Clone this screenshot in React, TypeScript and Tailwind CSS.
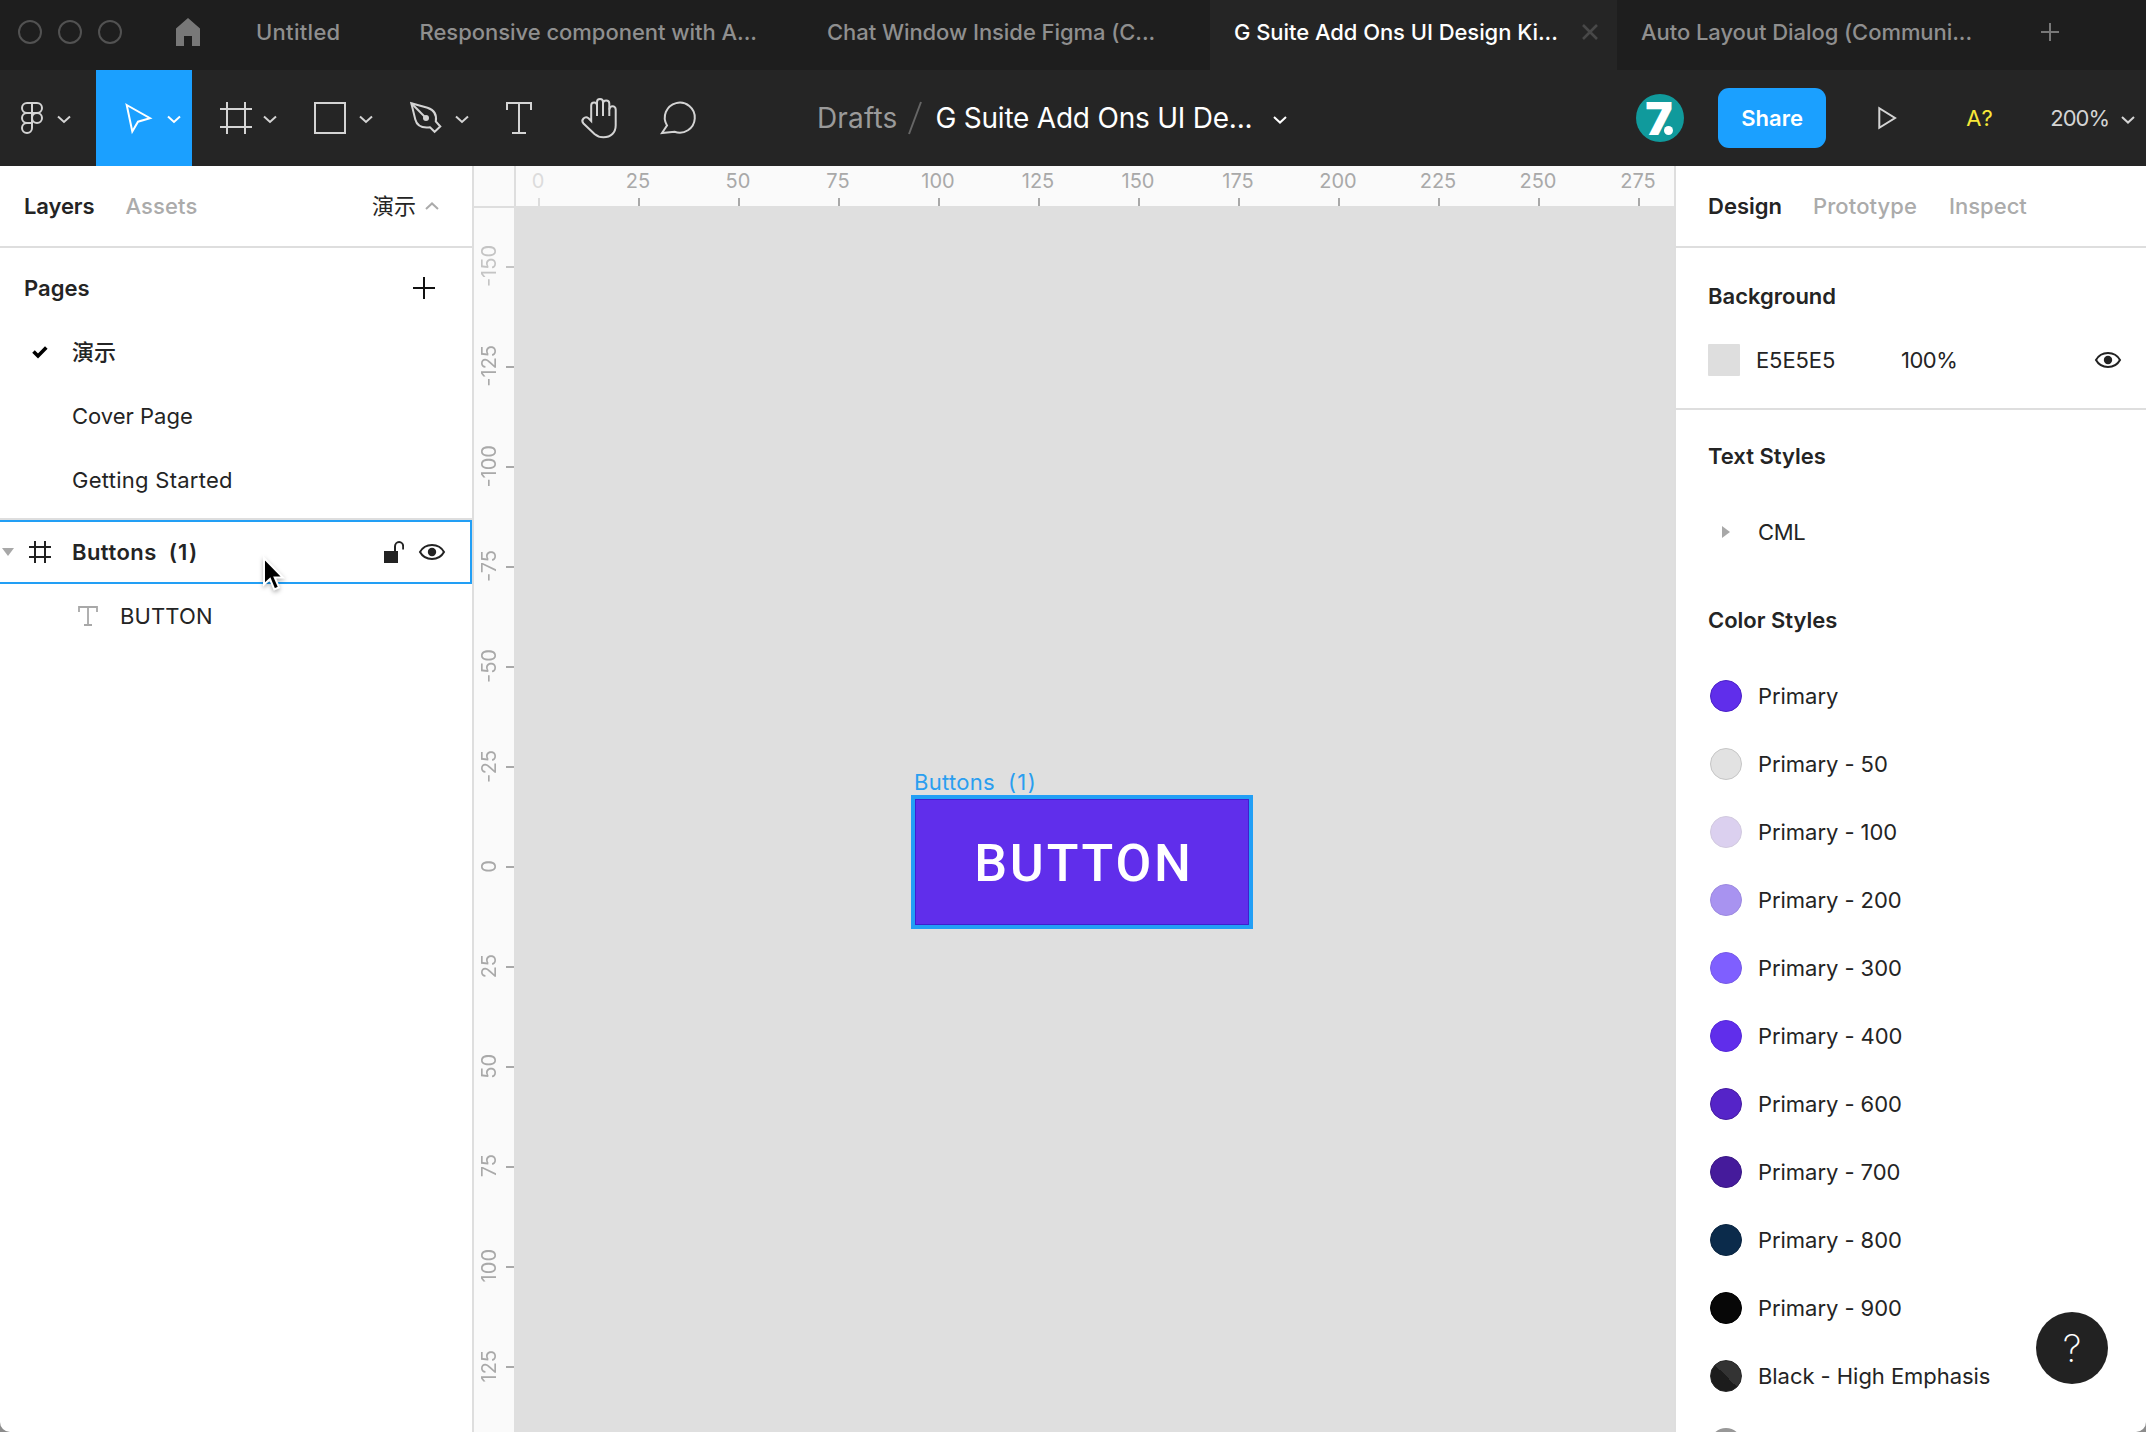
import React from "react";

const NBSP = "\u00a0";

function Chevron({ className = "" }: { className?: string }) {
  return (
    <svg className={className} width="14" height="8" viewBox="0 0 14 8" fill="none" stroke="currentColor" strokeWidth="2">
      <path d="M1 1l6 5.6L13 1" />
    </svg>
  );
}

function Eye() {
  return (
    <svg width="28" height="20" viewBox="0 0 28 20" fill="none" stroke="#222" strokeWidth="2">
      <path d="M2 10C4.600 5.300 9 3 14 3s9.400 2.300 12 7c-2.600 4.700-7 7-12 7S4.600 14.700 2 10Z" />
      <circle cx="14" cy="10" r="4.200" fill="#222" stroke="none" />
    </svg>
  );
}

/* ---------- Title bar ---------- */

function TitleBar() {
  return (
    <div className="flex h-[70px] shrink-0 bg-[#1e1e1e] text-[22px] font-medium leading-none text-[#8f8f8f]">
      <div className="flex w-[232px] shrink-0 items-center gap-4 pb-1.5 pl-[18px]">
        <span className="size-6 rounded-full border-2 border-[#525252]" />
        <span className="size-6 rounded-full border-2 border-[#525252]" />
        <span className="size-6 rounded-full border-2 border-[#525252]" />
        <svg className="ml-[38px]" width="24" height="28" viewBox="0 0 24 28" fill="#787878">
          <path d="M12 0L24 10.500V28H16V18H8V28H0V10.500Z" />
        </svg>
      </div>
      <div className="flex w-[164px] shrink-0 items-center pb-1.5 pl-6 tracking-[0.300px]">Untitled</div>
      <div className="flex w-[407px] shrink-0 items-center whitespace-nowrap pb-1.5 pl-[23.500px] tracking-[-0.030px]">
        Responsive component with A...
      </div>
      <div className="flex w-[407px] shrink-0 items-center whitespace-nowrap pb-1.5 pl-6 tracking-[-0.060px]">
        Chat Window Inside Figma (C...
      </div>
      <div className="flex w-[407px] shrink-0 items-center justify-between whitespace-nowrap bg-[#252525] pb-1.5 pl-6 pr-[19px] tracking-[-0.060px] text-white">
        G Suite Add Ons UI Design Ki...
        <svg width="16" height="16" viewBox="0 0 16 16" stroke="#484848" strokeWidth="2.600">
          <path d="M1 1l14 14M15 1L1 15" />
        </svg>
      </div>
      <div className="flex w-[424px] shrink-0 items-center whitespace-nowrap pb-1.5 pl-6 tracking-[-0.060px]">
        Auto Layout Dialog (Communi...
      </div>
      <div className="flex items-center pb-1.5">
        <svg width="18" height="18" viewBox="0 0 18 18" stroke="#787878" strokeWidth="2">
          <path d="M9 0v18M0 9h18" />
        </svg>
      </div>
    </div>
  );
}

/* ---------- Toolbar ---------- */

function Tool({ box, className, children }: { box: string; className: string; children: React.ReactNode }) {
  return (
    <div className={className}>
      <svg className="size-full" viewBox={box} fill="none" stroke="currentColor" strokeWidth="2">
        {children}
      </svg>
    </div>
  );
}

function Toolbar() {
  const wide = "size-24 shrink-0 text-[#d4d4d4]";
  const narrow = "h-24 w-20 shrink-0 text-[#d4d4d4]";
  return (
    <div className="flex h-24 shrink-0 items-center bg-[#252525] leading-none text-[#d4d4d4]">
      <Tool box="0 70 96 96" className={wide}>
        <path d="M32 103h-5a5 5 0 0 0 0 10h5M32 103h5a5 5 0 0 1 0 10h-5M32 113h-5a5 5 0 0 0 0 10h5M32 123h-5a5 5 0 1 0 5 5V103" />
        <circle cx="37" cy="118" r="5" />
        <path d="M58 116.500l6 5.500 6-5.500" />
      </Tool>
      <Tool box="96 70 96 96" className="size-24 shrink-0 bg-[#1ba0ff] text-white">
        <path d="M126.700 105L150 118.200 138 121.700 132.300 131.500Z" />
        <path d="M168 116.500l6 5.500 6-5.500" />
      </Tool>
      <Tool box="192 70 96 96" className={wide}>
        <path d="M227 102v32M245 102v32M220 109h32M220 127h32" />
        <path d="M264 116.500l6 5.500 6-5.500" />
      </Tool>
      <Tool box="288 70 96 96" className={wide}>
        <rect x="315" y="103" width="30" height="30" />
        <path d="M360 116.500l6 5.500 6-5.500" />
      </Tool>
      <Tool box="384 70 96 96" className={wide}>
        <path d="M411.300 103.200L427.500 107.800C434 110 437 114.500 435.800 121.500L440.300 126.500 434.600 131.800 430 127.200C421.500 128.300 416.800 125.500 415.300 119.500Z" />
        <path d="M411.300 103.200L426 118" />
        <circle cx="426" cy="118" r="3" fill="currentColor" stroke="none" />
        <path d="M456 116.500l6 5.500 6-5.500" />
      </Tool>
      <Tool box="480 70 80 96" className={narrow}>
        <path d="M507 110v-7h24v7M519 103v30M512 133h14" />
      </Tool>
      <Tool box="560 70 80 96" className={narrow}>
        <path d="M597 116v-10.500a2.900 2.900 0 0 0-5.800 0V121l-2.700-2.700c-3.500-2.800-8.200 1.700-5 5.200L594.500 134c3 2.600 5.500 3.300 9 3.300 7.500 0 12.200-4.800 12.200-12V109.500a3.150 3.150 0 0 0-6.300 0" />
        <path d="M597 106v-4a3 3 0 0 1 6 0v14M603 103.500a3.100 3 0 0 1 6.300 0V116" />
      </Tool>
      <Tool box="640 70 80 96" className={narrow}>
        <path d="M667 125.500a15 15 0 1 1 7.500 6.200L662 133Z" strokeLinejoin="miter" />
      </Tool>

      <div className="ml-[97px] flex shrink-0 items-center whitespace-nowrap text-[28px]">
        <span className="tracking-[0.150px] text-[#9a9a9a]">Drafts</span>
        <svg className="ml-[11px]" width="14" height="34" viewBox="0 0 14 34" stroke="#666" strokeWidth="2">
          <path d="M1 33L13 1" />
        </svg>
        <span className="ml-[13px] tracking-[-0.220px] text-white">G Suite Add Ons UI De...</span>
        <Chevron className="ml-[21px] mt-1 text-white" />
      </div>

      <div className="ml-auto flex shrink-0 items-center text-[22px]">
        <div className="relative flex size-12 items-center rounded-full bg-[#109a9c] pl-[9px]">
          <span className="text-[46px] font-black text-white">7</span>
          <span className="absolute left-[28px] top-[32px] size-[9px] rounded-full bg-white ring-2 ring-[#109a9c]" />
        </div>
        <div className="ml-[34px] flex h-[60px] w-[108px] items-center justify-center rounded-[11px] bg-[#1ba0ff] font-semibold text-white">
          Share
        </div>
        <svg className="ml-[52px]" width="20" height="24" viewBox="0 0 20 24" fill="none" stroke="currentColor" strokeWidth="2">
          <path d="M1.300 2.200v19.600L17 12Z" />
        </svg>
        <span className="ml-[68px] tracking-[1.500px] text-[#f8e838]">A?</span>
        <span className="ml-14 tracking-[-1px]">200%</span>
        <Chevron className="ml-3 mr-[11px] mt-1" />
      </div>
    </div>
  );
}

/* ---------- Left panel ---------- */

function LeftPanel() {
  return (
    <div className="relative flex w-[474px] shrink-0 flex-col border-r-2 border-[#dedede] bg-white text-[22px] leading-none text-[#242424]">
      <div className="flex h-[82px] items-center border-b-2 border-[#dedede] pl-6 pr-[33px]">
        <span className="font-semibold tracking-[-0.100px]">Layers</span>
        <span className="ml-[31px] font-medium tracking-[0.110px] text-[#ababab]">Assets</span>
        <span className="ml-auto">演示</span>
        <Chevron className="ml-[9px] rotate-180 text-[#ababab]" />
      </div>
      <div className="flex h-20 items-center justify-between pl-6 pr-[37px]">
        <span className="font-semibold">Pages</span>
        <svg width="22" height="22" viewBox="0 0 22 22" stroke="#111" strokeWidth="2">
          <path d="M11 0v22M0 11h22" />
        </svg>
      </div>
      <div className="flex h-14 items-center pb-2 pl-8">
        <svg width="16" height="14" viewBox="0 0 16 14" fill="none" stroke="#000" strokeWidth="3.600">
          <path d="M1.500 6.500L6 11 14.300 2.500" />
        </svg>
        <span className="ml-6 font-medium">演示</span>
      </div>
      <div className="flex h-16 items-center pl-[72px]">
        <span>Cover Page</span>
      </div>
      <div className="flex h-16 items-center pl-[72px]">
        <span className="tracking-[0.270px]">Getting Started</span>
      </div>
      <div className="h-1.5" />
      <div className="flex h-[68px] flex-col border-t-2 border-[#dedede]">
        <div className="flex h-16 items-center border-y-2 border-r-2 border-[#229ff5] pl-[2px] pr-6">
          <svg width="12" height="8" viewBox="0 0 12 8" fill="#a8a8a8">
            <path d="M0 0h12L6 8Z" />
          </svg>
          <svg className="ml-[15px]" width="22" height="22" viewBox="0 0 22 22" stroke="#222" strokeWidth="2">
            <path d="M6 0v22M16 0v22M0 6h22M0 16h22" />
          </svg>
          <div className="ml-[21px] whitespace-pre font-semibold tracking-[0.450px]">
            Buttons{NBSP + NBSP}
            <span className="tracking-[1.200px]">(1)</span>
          </div>
          <svg className="ml-auto" width="20" height="22" viewBox="0 0 20 22" fill="none" stroke="#222" strokeWidth="2">
            <rect x="0" y="10" width="14" height="12" fill="#222" stroke="none" />
            <path d="M11 10.500V5.500a4 4.300 0 0 1 8.200 0V8.500" />
          </svg>
          <div className="ml-3.5">
            <Eye />
          </div>
        </div>
      </div>
      <div className="-mt-0.5 flex h-16 items-center pl-[78px]">
        <svg width="20" height="20" viewBox="0 0 20 20" fill="none" stroke="#a8a8a8" strokeWidth="1.800">
          <path d="M1 6V1h18v5M10 1v18M6 19h8" />
        </svg>
        <span className="ml-[22px] tracking-[0.130px]">BUTTON</span>
      </div>
      <svg
        className="absolute left-[260px] top-[388px] drop-shadow-[0_2px_2px_rgba(0,0,0,0.3)]"
        width="26"
        height="40"
        viewBox="0 0 26 40"
        fill="#000"
        stroke="#fff"
        strokeWidth="2"
      >
        <path d="M4 4V30.500L10 25 14.300 35.500 19 33.400 14.700 23.500H23Z" />
      </svg>
    </div>
  );
}

/* ---------- Canvas ---------- */

const RULER_X = ["0", "25", "50", "75", "100", "125", "150", "175", "200", "225", "250", "275"];
const RULER_Y = ["-150", "-125", "-100", "-75", "-50", "-25", "0", "25", "50", "75", "100", "125"];

function Canvas() {
  return (
    <div className="flex min-w-0 flex-1 flex-col bg-[#dfdfdf] text-[20px] leading-none text-[#a9a9a9]">
      <div className="flex h-10 shrink-0 overflow-hidden bg-[#fafafa]">
        <div className="w-[42px] shrink-0 border-r-2 border-[#dedede]" />
        <div className="-ml-[27px] flex shrink-0">
          {RULER_X.map((n, i) => (
            <div
              key={n}
              className={
                i === 0
                  ? "flex w-[100px] shrink-0 flex-col items-center justify-between pt-[5px] text-[#dcdcdc]"
                  : "flex w-[100px] shrink-0 flex-col items-center justify-between pt-[5px]"
              }
            >
              <span className="-ml-0.5">{n}</span>
              <span className="h-2 w-0.5 bg-current" />
            </div>
          ))}
        </div>
      </div>
      <div className="flex min-h-0 flex-1">
        <div className="flex w-10 shrink-0 flex-col overflow-hidden bg-[#fafafa]">
          <div className="h-[11px] shrink-0 border-t-2 border-[#dedede]" />
          {RULER_Y.map((n, i) => (
            <div
              key={n}
              className={
                i === 0
                  ? "flex h-[100px] shrink-0 items-center justify-between pl-[5px] text-[#c4c4c4]"
                  : "flex h-[100px] shrink-0 items-center justify-between pl-[5px]"
              }
            >
              <span className="-mt-0.5 rotate-180 [writing-mode:vertical-rl]">{n}</span>
              <span className="h-0.5 w-2 bg-current" />
            </div>
          ))}
        </div>
        <div className="relative flex-1">
          <div className="absolute left-[397px] top-[565px] whitespace-pre pl-[3px] text-[22px] tracking-[0.300px] text-[#2a9ef0]">
            Buttons{NBSP + NBSP}
            <span className="tracking-[1.400px]">(1)</span>
          </div>
          <div className="absolute left-[397px] top-[589px] flex h-[134px] w-[342px] items-center justify-center border-4 border-[#229ff5] bg-[#602eeb] pt-1 shadow-[inset_0_0_0_1px_#3d20cf]">
            <span className="pl-1 font-['Roboto'] text-[52px] font-medium tracking-[2.850px] text-white">BUTTON</span>
          </div>
        </div>
      </div>
    </div>
  );
}

/* ---------- Right panel ---------- */

const SWATCHES: [string, string][] = [
  ["Primary", "bg-[#602eeb] border-[#4a20c8]"],
  ["Primary - 50", "bg-[#e2e2e2] border-[#c6c6c6]"],
  ["Primary - 100", "bg-[#dbd0ef] border-[#d2cadf]"],
  ["Primary - 200", "bg-[#a893f0] border-[#9d8ae0]"],
  ["Primary - 300", "bg-[#7f5fff] border-[#775be6]"],
  ["Primary - 400", "bg-[#602eeb] border-[#5528da]"],
  ["Primary - 600", "bg-[#5524c8] border-[#451ba0]"],
  ["Primary - 700", "bg-[#451b9b] border-[#3a1885]"],
  ["Primary - 800", "bg-[#0b2b4b] border-[#0a2541]"],
  ["Primary - 900", "bg-[#070707] border-[#000000]"],
  ["Black - High Emphasis", "bg-linear-45 from-[#1c1c1c] from-50% to-[#333333] to-50% border-[#262626]"],
];

function RightPanel() {
  return (
    <div className="relative flex w-[472px] shrink-0 flex-col overflow-hidden border-l-2 border-[#dedede] bg-white text-[22px] leading-none text-[#242424]">
      <div className="flex h-[82px] shrink-0 items-center border-b-2 border-[#dedede] pl-8 font-medium text-[#ababab]">
        <span className="font-semibold text-[#242424]">Design</span>
        <span className="ml-[31px] tracking-[0.100px]">Prototype</span>
        <span className="ml-8">Inspect</span>
      </div>
      <div className="flex h-[162px] shrink-0 flex-col border-b-2 border-[#dedede] pl-8 pr-6">
        <div className="flex h-24 items-center font-semibold">Background</div>
        <div className="flex h-8 items-center">
          <span className="size-8 rounded-[1px] bg-[#dedede]" />
          <span className="ml-4 w-[145px] tracking-[-0.100px]">E5E5E5</span>
          <span className="tracking-[-0.500px]">100%</span>
          <div className="ml-auto">
            <Eye />
          </div>
        </div>
      </div>
      <div className="flex h-[92px] shrink-0 items-center pl-8 font-semibold">Text Styles</div>
      <div className="flex h-[60px] shrink-0 items-center pl-[46px]">
        <svg width="8" height="12" viewBox="0 0 8 12" fill="#a8a8a8">
          <path d="M0 0v12L8 6Z" />
        </svg>
        <span className="ml-7 tracking-[-0.300px]">CML</span>
      </div>
      <div className="flex h-[100px] shrink-0 items-center pl-8 pt-4 font-semibold">Color Styles</div>
      {SWATCHES.map(([name, color]) => (
        <div key={name} className="flex h-[68px] shrink-0 items-center pl-[34px]">
          <span className={"size-8 rounded-full border " + color} />
          <span className="ml-4 tracking-[-0.050px]">{name}</span>
        </div>
      ))}
      <div className="flex h-[68px] shrink-0 items-center pl-[34px]">
        <span className="size-8 rounded-full bg-[#989898]" />
      </div>
      <div className="absolute bottom-12 right-[38px] flex size-[72px] items-center justify-center rounded-full bg-[#222] text-[38px] font-extralight text-white">
        ?
      </div>
    </div>
  );
}

export default function App() {
  return (
    <div className="h-[1432px] w-[2146px] overflow-hidden bg-[#8c8c8c]">
      <div className="flex h-full w-full flex-col overflow-hidden rounded-b-[10px] font-['Inter','Noto_Sans_CJK_SC',sans-serif]">
        <TitleBar />
        <Toolbar />
        <div className="flex min-h-0 flex-1">
          <LeftPanel />
          <Canvas />
          <RightPanel />
        </div>
      </div>
    </div>
  );
}
